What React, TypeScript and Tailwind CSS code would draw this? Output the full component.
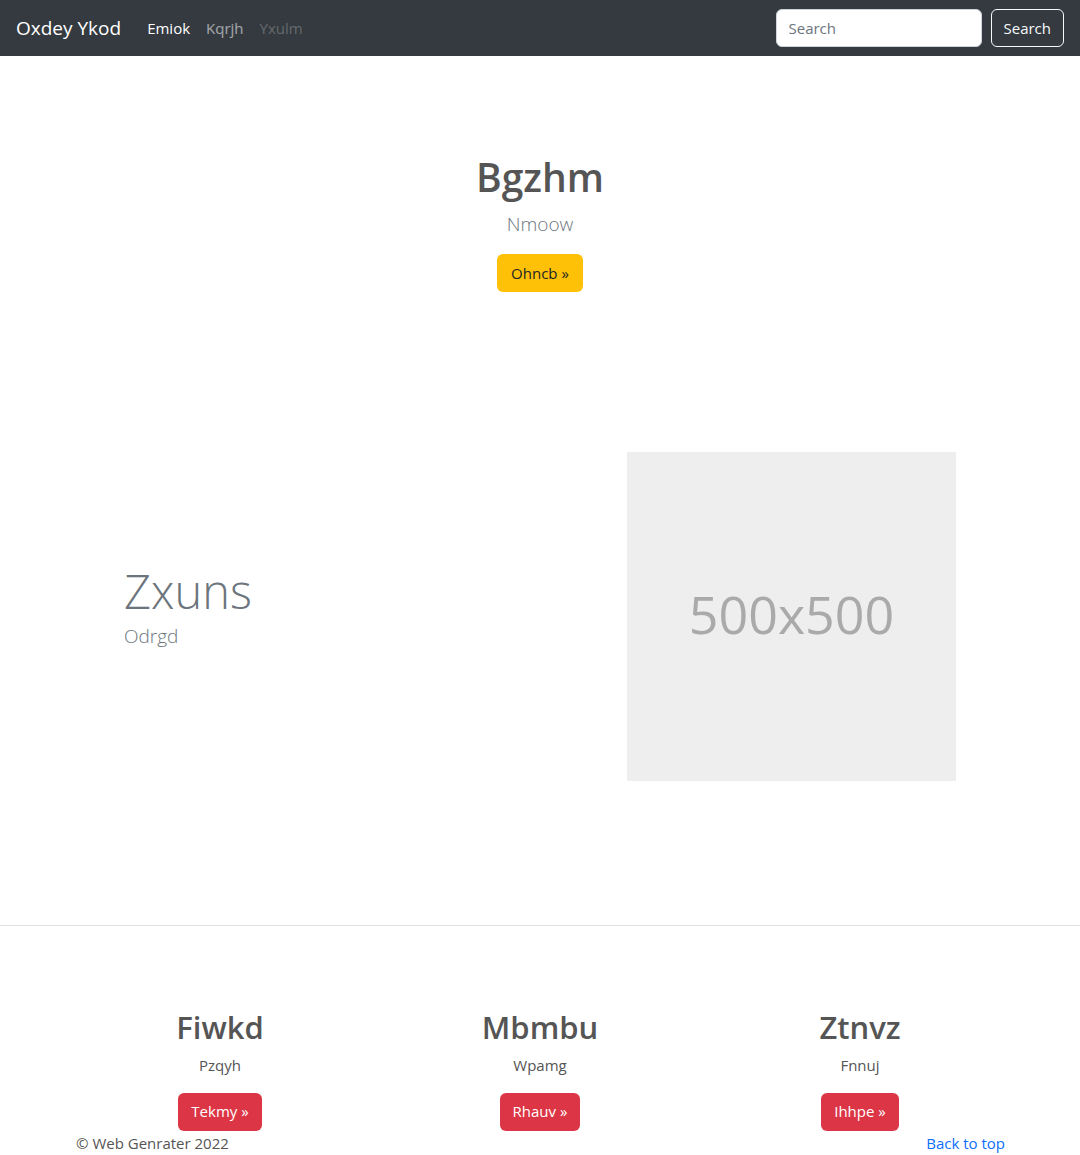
import React from 'react';

const font = { fontFamily: '"Open Sans", "Noto Sans", sans-serif' };

const NavBar: React.FC = () => (
  <nav className="h-[56px] bg-[#343a40] flex items-center justify-between px-4">
    <div className="flex items-center">
      <a href="#" className="text-white text-[19px] mr-[18px] leading-[30px]">Oxdey Ykod</a>
      <div className="flex items-center text-[15px]">
        <a href="#" className="text-white px-[8px]">Emiok</a>
        <a href="#" className="text-white/55 px-[8px]">Kqrjh</a>
        <span className="text-white/25 px-[8px]">Yxulm</span>
      </div>
    </div>
    <form className="flex items-center gap-[9px]" onSubmit={(e) => e.preventDefault()}>
      <input
        type="search"
        placeholder="Search"
        className="w-[206px] h-[38px] rounded-[6px] bg-white border border-[#ced4da] px-3 text-[15px] placeholder:text-[#6c757d] outline-none"
      />
      <button className="h-[38px] px-[12px] rounded-[6px] border border-[#f8f9fa] text-[#f8f9fa] text-[15px]">Search</button>
    </form>
  </nav>
);

const Column: React.FC<{ title: string; text: string; cta: string }> = ({ title, text, cta }) => (
  <div className="flex flex-col items-center">
    <h2 className="text-[31px] font-semibold text-[#555] leading-[38px]">{title}</h2>
    <p className="text-[15px] text-[#555] mt-[8px]">{text}</p>
    <button className="mt-[16px] h-[38px] px-[13px] rounded-[6px] bg-[#dc3545] text-white text-[15px]">{cta} »</button>
  </div>
);

export default function App() {
  return (
    <div style={font} className="bg-white min-h-[1155px]">
      <NavBar />

      <section className="pt-[97px] flex flex-col items-center">
        <h1 className="text-[39px] font-semibold text-[#555] leading-[48px]">Bgzhm</h1>
        <p className="text-[19px] font-light text-[#6c757d] mt-[8px] leading-[30px]">Nmoow</p>
        <button className="mt-[15px] h-[38px] px-[14px] rounded-[6px] bg-[#ffc107] text-[#212529] text-[15px]">Ohncb »</button>
      </section>

      <section className="mt-[160px] flex items-center pl-[124px]">
        <div className="w-[503px] pb-[20px]">
          <h1 className="text-[47px] font-light text-[#6c757d] leading-[58px]">Zxuns</h1>
          <p className="text-[19px] font-light text-[#6c757d] leading-[32px]">Odrgd</p>
        </div>
        <div className="w-[329px] h-[329px] bg-[#eeeeee] flex items-center justify-center">
          <span className="text-[52px] text-[#aaaaaa] leading-none pb-[6px]">500x500</span>
        </div>
      </section>

      <hr className="mt-[144px] border-t border-[#dee2e6]" />

      <section className="mx-auto w-[960px] grid grid-cols-3 pt-[82px]">
        <Column title="Fiwkd" text="Pzqyh" cta="Tekmy" />
        <Column title="Mbmbu" text="Wpamg" cta="Rhauv" />
        <Column title="Ztnvz" text="Fnnuj" cta="Ihhpe" />
      </section>

      <footer className="mx-auto w-[960px] px-4 mt-[1px] flex justify-between text-[15px]">
        <p className="text-[#555]">© Web Genrater 2022</p>
        <a href="#" className="text-[#0d6efd] mr-[-1px]">Back to top</a>
      </footer>
    </div>
  );
}
